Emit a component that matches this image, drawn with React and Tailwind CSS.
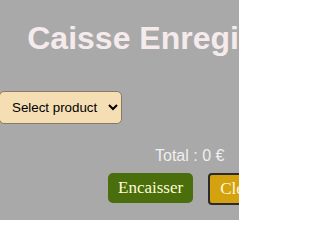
import React from "react";

export default function App() {
  return (
    <div className="w-[239px] h-[220px] overflow-hidden bg-[#a9a9a9]" style={{ fontFamily: '"Liberation Sans", Arial, sans-serif' }}>
      <div className="w-[380px] flex flex-col">
        <h1 className="mt-[20px] text-center text-[32px] font-bold leading-[37px] text-[#f6ebec]" style={{ fontFamily: '"Liberation Sans", Arial, sans-serif' }}>
          Caisse Enregistreuse
        </h1>
        <div className="mt-[34px] flex">
          <select className="h-[33px] w-[123px] -ml-px rounded-[5px] border border-[#8a7a60] bg-[#f5deb3] pl-[8px] pr-[4px] text-[13.33px] text-black">
            <option>Select product</option>
          </select>
        </div>
        <div className="mt-[23px] pl-[155px] text-[16px] leading-[18px] text-[#efefef]">Total : 0 €</div>
        <div className="mt-[8px] flex gap-[15px] pl-[108px]">
          <button className="h-[30px] rounded-[5px] bg-[#4a6e0b] px-[10px] text-[17px] text-[#fffbd6]" style={{ fontFamily: '"Liberation Serif", "Times New Roman", serif' }}>
            Encaisser
          </button>
          <button className="h-[32px] rounded-[4px] border-2 border-[#2b2b2b] bg-[#d4a10f] px-[10px] text-[17px] text-[#fffbd6]" style={{ fontFamily: '"Liberation Serif", "Times New Roman", serif' }}>
            Clear
          </button>
        </div>
      </div>
    </div>
  );
}
